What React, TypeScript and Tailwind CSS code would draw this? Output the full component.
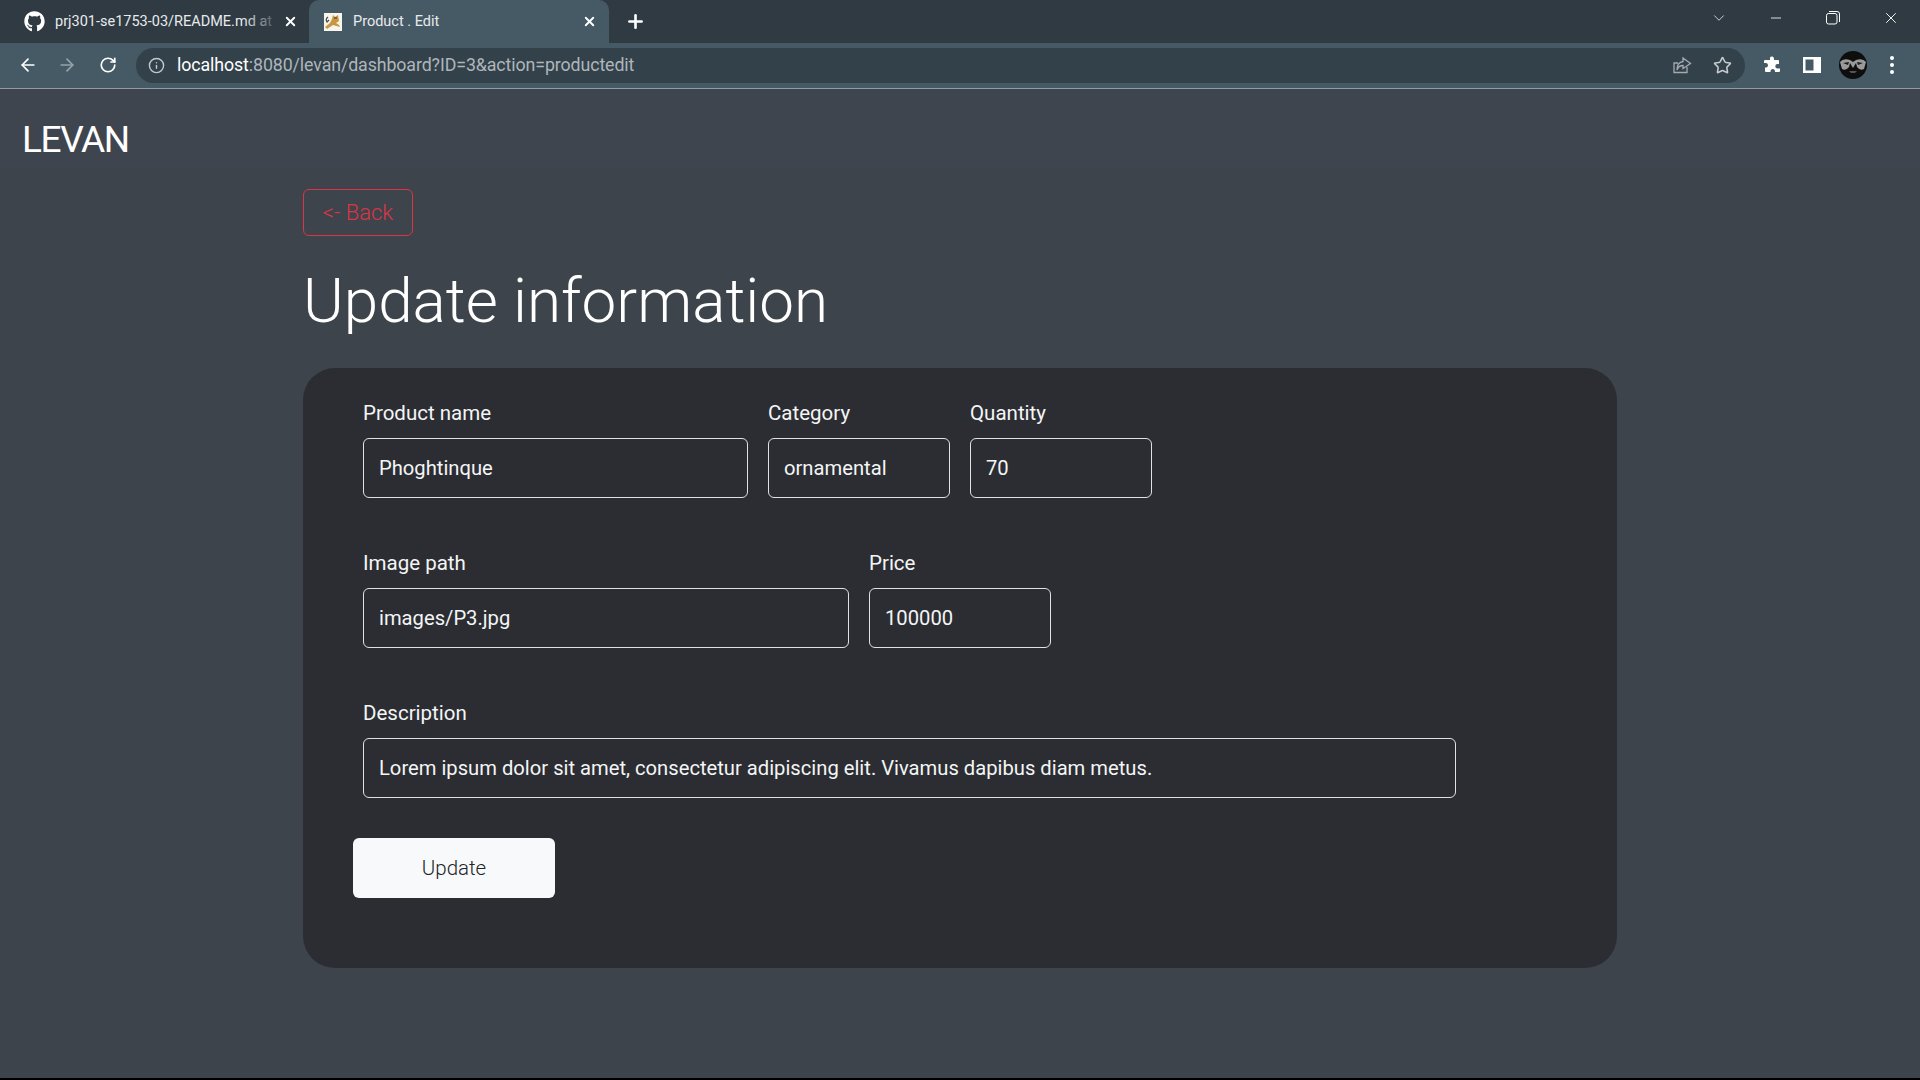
import React from "react";
import { FaGithub } from "react-icons/fa";
import { ArrowLeft, ArrowRight, RotateCw, Info, Star, X, Plus, ChevronDown, Minus } from "lucide-react";

const Field: React.FC<{ label: string; value: string; width: string }> = ({ label, value, width }) => (
  <div className={`flex flex-col ${width}`}>
    <label className="text-[20.5px] leading-[30px] font-normal text-[#f4f5f6] mb-[10px]">{label}</label>
    <input
      readOnly
      value={value}
      className="h-[60px] w-full rounded-[6px] border border-[#dee2e6] bg-transparent px-[15px] text-[20.2px] font-normal text-[#f4f5f6] outline-none"
    />
  </div>
);

const BrowserChrome = () => (
  <div className="font-['Roboto',sans-serif]">
    {/* tabs */}
    <div className="h-[43px] bg-[#2f3a42] flex items-end pl-[8px] relative">
      <div className="w-[302px] h-[43px] flex items-center pl-[16px] pr-[12px] text-[14.5px] text-[#e8eaed] relative">
        <FaGithub className="w-[21px] h-[21px] text-white shrink-0" />
        <span className="ml-[10px] w-[217px] overflow-hidden whitespace-nowrap">prj301-se1753-03/README.md at</span>
        <span className="absolute left-[235px] top-[10px] w-[38px] h-[22px] bg-gradient-to-r from-transparent to-[#2f3a42]" />
        <X className="ml-auto w-[15px] h-[15px] text-white" strokeWidth={3} />
      </div>
      <div className="w-[300px] h-[43px] ml-[-1px] bg-[#465a65] rounded-t-[10px] flex items-center pl-[15px] pr-[12px] text-[14.5px] text-[#e8eaed]">
        <svg width="18" height="18" viewBox="0 0 18 18" className="shrink-0">
          <rect width="18" height="18" fill="#f7f5ec" />
          <path d="M9 2 L11 4 L14 2 L15 8 L12 10 L15 12 L16 14 L9 12 L3 16 L1 14 L6 10 L8 6 Z" fill="#c9973f" />
          <path d="M4 4 Q1 6 3 9 L5 7" stroke="#444" strokeWidth="1.2" fill="none" />
          <path d="M10 5 H13" stroke="#333" strokeWidth="1" />
        </svg>
        <span className="ml-[11px]">Product . Edit</span>
        <X className="ml-auto w-[15px] h-[15px] text-white" strokeWidth={3} />
      </div>
      <Plus className="ml-[16px] mb-[11px] w-[21px] h-[21px] text-white" strokeWidth={3} />
      <div className="absolute top-0 right-0 h-[43px] pb-[7px] flex items-center text-white">
        <ChevronDown className="w-[18px] h-[18px] mr-[40px] text-[#d5d9dc]" strokeWidth={1.25} />
        <Minus className="w-[16px] h-[16px] mr-[42px]" strokeWidth={1.25} />
        <svg width="14" height="14" viewBox="0 0 14 14" className="mr-[42px]" fill="none" stroke="white" strokeWidth="1">
          <rect x="0.5" y="2.5" width="10.5" height="10.5" rx="2" />
          <path d="M3 0.5 H11 Q13.5 0.5 13.5 3 V11" />
        </svg>
        <X className="w-[18px] h-[18px] mr-[20px]" strokeWidth={1.25} />
      </div>
    </div>
    {/* toolbar */}
    <div className="h-[46px] bg-[#465a65] border-b border-[#8d9ca5] flex items-center pb-[1px]">
      <ArrowLeft className="ml-[18px] w-[20px] h-[20px] text-white" strokeWidth={2} />
      <ArrowRight className="ml-[19px] w-[20px] h-[20px] text-[#96a3ab]" strokeWidth={2} />
      <RotateCw className="ml-[22px] w-[18px] h-[18px] text-white" strokeWidth={2.25} />
      <div className="ml-[19px] w-[1609px] h-[35px] rounded-full bg-[#33414a] flex items-center pl-[12px] pr-[13px]">
        <Info className="w-[17px] h-[17px] text-[#c3c9cd]" />
        <span className="ml-[12px] text-[17.8px] tracking-[-0.1px] text-[#aeb6bb] whitespace-nowrap">
          <span className="text-white">localhost</span>:8080/levan/dashboard?ID=3&amp;action=productedit
        </span>
        <svg width="20" height="20" viewBox="0 0 20 20" className="ml-auto" fill="none" stroke="#a3abb0" strokeWidth="1.3">
          <path d="M15 12 V17.5 H2 V8 H6" />
          <path d="M11 3 L18.5 8.5 L11 13.5 V10.5 C8 10.5 6 12 5 15 C5 10 7.5 7 11 6.5 Z" />
        </svg>
        <Star className="ml-[21px] w-[19px] h-[19px] text-[#c5cbcf]" strokeWidth={2} />
      </div>
      {/* extensions puzzle, chrome's own shape */}
      <svg width="18" height="18" viewBox="0 0 18 18" className="ml-[18px]">
        <path
          d="M7 1.5 A2.2 2.2 0 0 1 11 2.5 V4 H15 A1 1 0 0 1 16 5 V8 H14.5 A2.2 2.2 0 0 0 14.5 12.4 H17 V15 A1 1 0 0 1 16 16 H12 V14.8 A2.3 2.3 0 0 0 7.5 14.8 V16 H3 A1 1 0 0 1 2 15 V11.5 H3.2 A2.3 2.3 0 0 0 3.2 7 H1 V5 A1 1 0 0 1 2 4 H7 Z"
          fill="white"
        />
      </svg>
      <svg width="18" height="16" viewBox="0 0 18 16" className="ml-[22px]">
        <path d="M0 0 H18 V16 H0 Z M2.5 2.5 V13.5 H10.5 V2.5 Z" fill="white" fillRule="evenodd" />
      </svg>
      <svg width="28" height="28" viewBox="0 0 28 28" className="ml-[18px]">
        <circle cx="14" cy="14" r="14" fill="#0e0e0e" />
        <path d="M1 11 Q4 7 11 9 L14 11 L17 9 Q24 7 27 11 L25 18 Q21 20 18 16 L17 12 L14 17 L11 12 L10 16 Q7 20 3 18 Z" fill="#9a9a9a" />
        <path d="M4 12 L10 11 L9 14 Z M24 12 L18 11 L19 14 Z" fill="#1c1c1c" />
        <path d="M10 20 H18 L16 22 H12 Z" fill="#555" />
      </svg>
      <div className="ml-[23px] flex flex-col gap-[3px]">
        <span className="w-[4px] h-[4px] rounded-full bg-white" />
        <span className="w-[4px] h-[4px] rounded-full bg-white" />
        <span className="w-[4px] h-[4px] rounded-full bg-white" />
      </div>
    </div>
  </div>
);

export default function App() {
  return (
    <div className="w-[1920px] h-[1080px] overflow-hidden flex flex-col bg-[#3d444c] font-['Roboto',sans-serif] relative">
      <BrowserChrome />
      <div className="h-[79px] flex items-start pl-[22px] pt-[29px] bg-[#3f454e]">
        <span className="text-[37px] leading-[44px] font-normal text-white tracking-[-1.4px]">LEVAN</span>
      </div>

      <div className="pl-[303px] w-[1617px]">
        <a className="mt-[21px] flex items-center justify-center w-[110px] h-[47px] rounded-[6px] border border-[#dc3545] text-[#dc3545] text-[22px] font-light">
          &lt;- Back
        </a>
        <h1 className="mt-[32px] h-[66px] leading-[66px] text-[62px] font-light text-white">Update information</h1>

        <div className="mt-[34px] w-[1314px] h-[600px] rounded-[32px] bg-[#2b2d32] pl-[60px] pt-[30px]">
          <div className="flex gap-[20px]">
            <Field label="Product name" value="Phoghtinque" width="w-[385px]" />
            <Field label="Category" value="ornamental" width="w-[182px]" />
            <Field label="Quantity" value="70" width="w-[182px]" />
          </div>
          <div className="flex gap-[20px] mt-[50px]">
            <Field label="Image path" value="images/P3.jpg" width="w-[486px]" />
            <Field label="Price" value="100000" width="w-[182px]" />
          </div>
          <div className="flex mt-[50px]">
            <Field
              label="Description"
              value="Lorem ipsum dolor sit amet, consectetur adipiscing elit. Vivamus dapibus diam metus."
              width="w-[1093px]"
            />
          </div>
          <button className="ml-[-10px] mt-[40px] w-[202px] h-[60px] rounded-[6px] bg-[#f8f9fa] text-[20.5px] font-light text-[#212529]">
            Update
          </button>
        </div>
      </div>
      <div className="absolute bottom-0 left-0 right-0 h-[2px] bg-black" />
    </div>
  );
}
